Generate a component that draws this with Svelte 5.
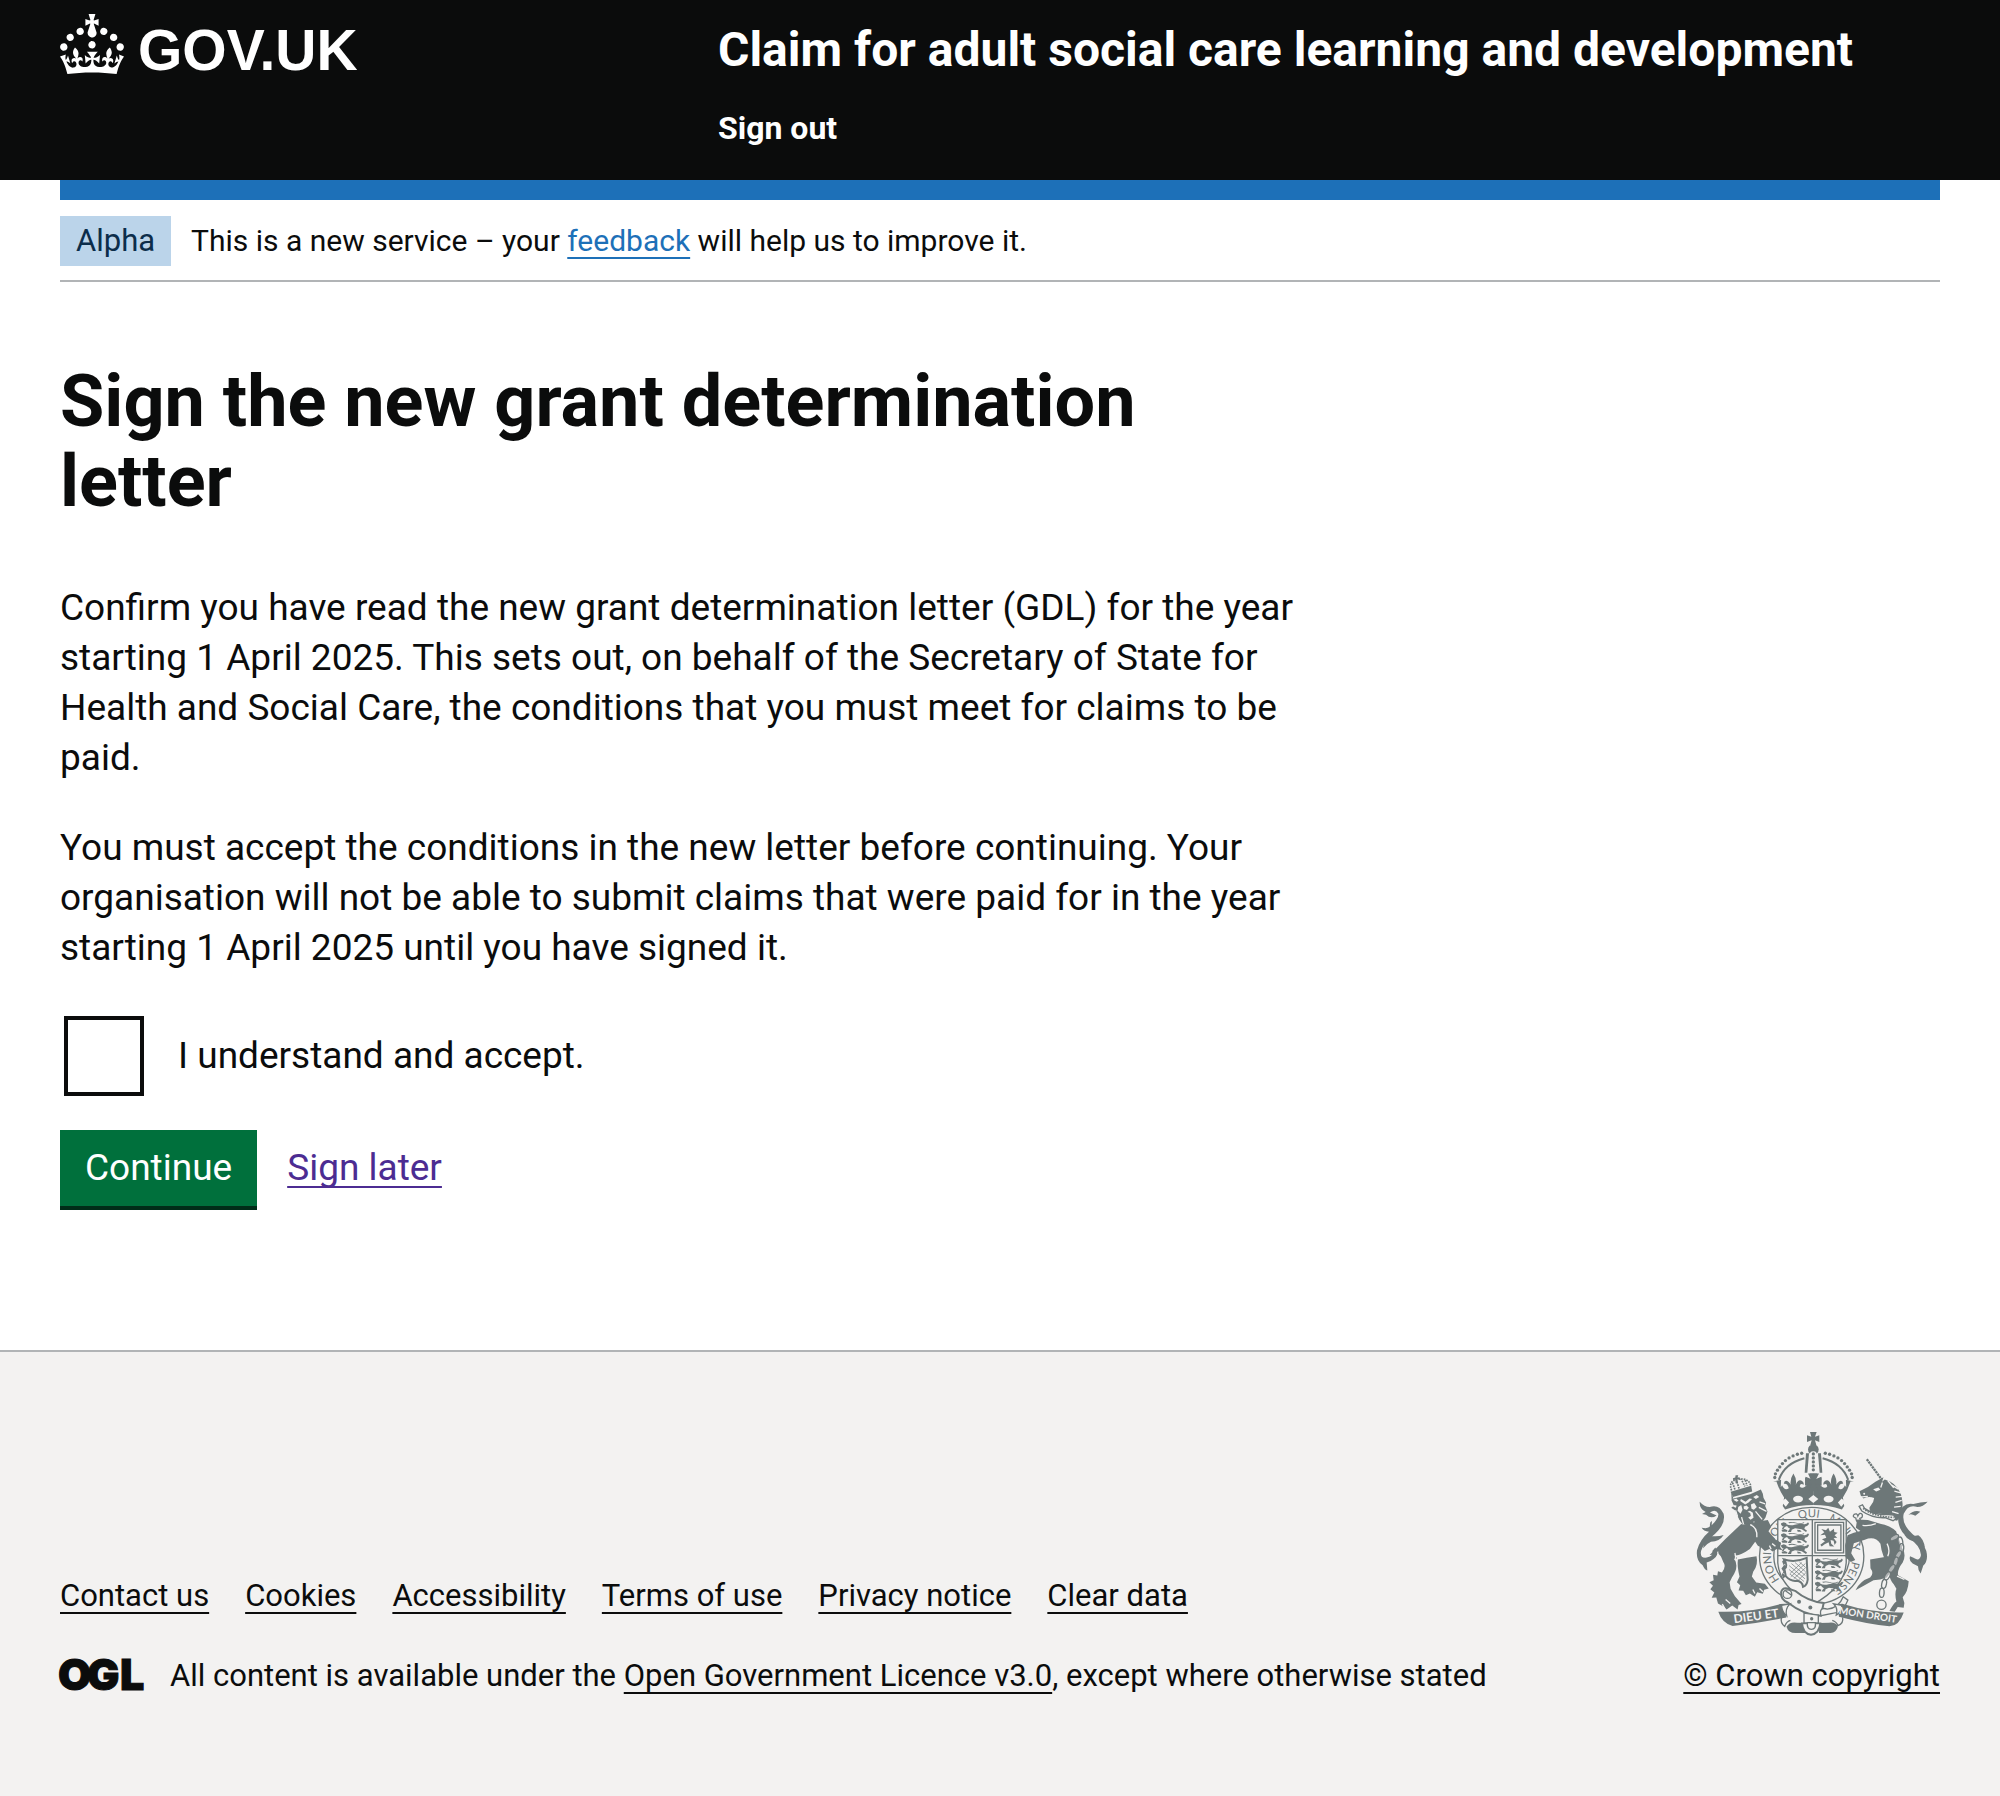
<script>
  const footerLinks = ['Contact us', 'Cookies', 'Accessibility', 'Terms of use', 'Privacy notice', 'Clear data'];
  let accepted = $state(false);

  // Beads along the left arch of the royal crown; the right arch mirrors them.
  const beads = [
    [308, 203], [310, 192], [316, 181], [323, 171], [331, 161], [340, 152],
    [351, 144], [363, 138], [376, 133], [389, 130]
  ];
  // Rows of lions passant in the first and fourth quarters of the shield.
  const lions = [
    [325, 337], [325, 370], [325, 403],
    [427, 446], [427, 481], [427, 516]
  ];
  // Words of the garter motto and where each starts along the ring.
  const motto = [
    ['HONI', 15], ['SOIT', 130], ['QUI', 240], ['MAL', 330], ['Y', 432], ['PENSE', 482]
  ];
  // Links of the unicorn's chain: centre and rotation.
  const chain = [
    [668, 384, 60], [686, 396, -10], [689, 416, 5], [680, 436, 30], [672, 456, 15],
    [660, 477, 35], [647, 499, 30], [637, 523, 12], [630, 550, 3]
  ];
</script>

<header class="header">
  <div class="container header-grid">
    <a class="logo" href="#home" aria-label="GOV.UK">
      <svg class="crown" viewBox="0 0 32 30" aria-hidden="true">
        <path d="M22.6 10.4c-1 .4-2-.1-2.4-1-.4-.9.1-2 1-2.4.9-.4 2 .1 2.4 1s-.1 2-1 2.4m-5.9 6.7c-.9.4-2-.1-2.4-1-.4-.9.1-2 1-2.4.9-.4 2 .1 2.4 1s-.1 2-1 2.4m10.8-3.7c-1 .4-2-.1-2.4-1-.4-.9.1-2 1-2.4.9-.4 2 .1 2.4 1s0 2-1 2.4m3.3 4.8c-1 .4-2-.1-2.4-1-.4-.9.1-2 1-2.4.9-.4 2 .1 2.4 1s-.1 2-1 2.4M17 4.7l2.3 1.2V2.5l-2.3.7-.2-.2.9-3h-3.4l.9 3-.2.2c-.1.1-2.3-.7-2.3-.7v3.4L15 4.7c.1.1.1.2.2.2l-1.3 4c-.1.2-.1.4-.1.6 0 1.1.8 2 1.9 2.2h.7c1-.2 1.9-1.1 1.9-2.1 0-.2 0-.4-.1-.6l-1.3-4c-.1-.2 0-.2.1-.3m-7.6 5.7c.9.4 2-.1 2.4-1 .4-.9-.1-2-1-2.4-.9-.4-2 .1-2.4 1s0 2 1 2.4m-5 3c.9.4 2-.1 2.4-1 .4-.9-.1-2-1-2.4-.9-.4-2 .1-2.4 1s.1 2 1 2.4m-3.2 4.8c.9.4 2-.1 2.4-1 .4-.9-.1-2-1-2.4-.9-.4-2 .1-2.4 1s0 2 1 2.4m14.8 11c4.4 0 8.6.3 12.3.8 1.1-4.5 2.4-7 3.7-8.8l-2.5-.9c.2 1.3.3 1.9 0 2.7-.4-.4-.8-1.1-1.1-2.3l-1.2 4c.7-.5 1.3-.8 2-.9-1.1 2.5-2.6 3.1-3.5 3-1.1-.2-1.7-1.2-1.5-2.1.3-1.2 1.5-1.5 2.1-.1 1.1-2.3-.8-3-2-2.3 1.9-1.9 2.1-3.5.6-5.6-2.1 1.6-2.1 3.2-1.2 5.5-1.2-1.4-3.2-.6-2.5 1.6.9-1.4 2.1-.5 1.9.8-.2 1.1-1.7 2.1-3.5 1.9-2.7-.2-2.9-2.1-2.9-3.6.7-.1 1.9.5 2.9 1.9l.4-4.3c-1.1 1.1-2.1 1.4-3.2 1.4.4-1.2 2.1-3 2.1-3h-5.4s1.7 1.9 2.1 3c-1.1 0-2.1-.2-3.2-1.4l.4 4.3c1-1.4 2.2-2 2.9-1.9-.1 1.5-.2 3.4-2.9 3.6-1.9.2-3.4-.8-3.5-1.9-.2-1.3 1-2.2 1.9-.8.7-2.3-1.2-3-2.5-1.6.9-2.2.9-3.9-1.2-5.5-1.5 2-1.3 3.7.6 5.6-1.2-.7-3.1 0-2 2.3.6-1.4 1.8-1.1 2.1.1.2.9-.3 1.9-1.5 2.1-.9.2-2.4-.5-3.5-3 .6 0 1.2.3 2 .9l-1.2-4c-.3 1.1-.7 1.9-1.1 2.3-.3-.8-.2-1.4 0-2.7l-2.9.9C1.3 23 2.6 25.5 3.7 30c3.7-.5 7.9-.8 12.3-.8" />
      </svg>
      <span class="wordmark">GOV.UK</span>
    </a>
    <div class="service">
      <a class="service-name" href="#service">Claim for adult social care learning and development</a>
      <nav aria-label="Account"><a class="sign-out" href="#sign-out">Sign out</a></nav>
    </div>
  </div>
</header>

<div class="container">
  <div class="bar"></div>
  <div class="phase">
    <strong class="tag">Alpha</strong>
    <span>This is a new service – your <a class="link" href="#feedback">feedback</a> will help us to improve it.</span>
  </div>

  <main class="main">
    <h1>Sign the new grant determination letter</h1>
    <p>
      Confirm you have read the new grant determination letter (GDL) for the year starting
      1 April 2025. This sets out, on behalf of the Secretary of State for Health and Social
      Care, the conditions that you must meet for claims to be paid.
    </p>
    <p>
      You must accept the conditions in the new letter before continuing. Your organisation
      will not be able to submit claims that were paid for in the year starting 1 April 2025
      until you have signed it.
    </p>
    <form onsubmit={(e) => e.preventDefault()}>
      <div class="checkbox">
        <input id="accept" type="checkbox" bind:checked={accepted} />
        <label for="accept">I understand and accept.</label>
      </div>
      <div class="actions">
        <button type="submit">Continue</button>
        <a class="visited" href="#later">Sign later</a>
      </div>
    </form>
  </main>
</div>

<footer class="footer">
  <div class="container footer-row">
    <div class="meta">
      <ul>
        {#each footerLinks as label}
          <li><a href="#footer">{label}</a></li>
        {/each}
      </ul>
      <div class="licence">
        <svg class="ogl" viewBox="0 0 82 34" role="img" aria-label="Open Government Licence">
          <text x="-2 27 60" y="31">OGL</text>
        </svg>
        <span>All content is available under the <a href="#ogl">Open Government Licence v3.0</a>, except where otherwise stated</span>
      </div>
    </div>

    <div class="copyright">
      <svg class="arms" viewBox="60 60 720 620" aria-hidden="true">
        <defs>
          <path id="garter" d="M333 521A122 116 0 1 1 440 553" />
          <g id="passant">
            <path d="M2 4l8-3 8 3-1 6-5 4-6-1-4-5zM17 6q12 6 26 2l16-3 14 2q8-1 10-6l3 4q-3 8-12 9l-2 6 8 6-3 4-13-8-20-3-10 4-2 7h-10l3-5 4-5q-7-3-9-8l-7 3-4 7H4l3-6zM24 1q12-3 24 1t24-2l-2 4q-12 4-24 0t-20 0z" />
            <path d="M3 24l10-3 8 4-1 4H6zM50 23l9 1 5 5h-12z" />
          </g>
          <g id="half-crown">
            <path class="line thick" d="M320 210Q338 160 397 145" />
            <path d="M402 130h9l-5 59h-8z" />
            <path d="M303 215l24-5-1 22 4-6q8 18 20 9-4-16-15-13 2-13 13-7 5 4 8 10-3-17 8-34 11 17 7 34 8-20 20-11 5 4 4 11-10-7-12 4 5 8 16 2 8-7 5-16l-3-1v-13l20 8-8-18h12v95q-46 0-86 13l-7-10 4-26q-14-20-23-48z" />
            {#each beads as [x, y]}<circle cx={x} cy={y} r="5" />{/each}
          </g>
        </defs>

        <!-- Crown -->
        <use href="#half-crown" />
        <use href="#half-crown" transform="matrix(-1 0 0 1 849 0)" />
        <path d="M414 66h20l-5 14 13-4v20l-13-5 4 14h-18l4-14-14 5V76l13 4z" />
        <circle cx="424" cy="119" r="16" />
        <path class="cut" d="M412 140q0-16 12-16t12 16v48h-24z" />
        {#each [132, 144, 156, 168, 180] as y}<circle cx="424" cy={y} r="5" />{/each}
        <path d="M408 191h33l-10 20 18-9v26l-18-8 8 24h-29l8-24-19 8v-26l18 9z" />
        <g class="cut">
          <ellipse cx="378" cy="268" rx="15" ry="10" /><ellipse cx="470" cy="268" rx="15" ry="10" />
          <path d="M424 256l15 12-15 12-15-12zM328 276l12-10 11 12-10 13zM521 276l-12-10-11 12 10 13z" />
        </g>

        <!-- Garter -->
        <ellipse class="paper" cx="419" cy="439" rx="157" ry="146" />
        <ellipse class="line" cx="419" cy="439" rx="114" ry="109" />
        <text class="motto">{#each motto as [word, start]}<textPath href="#garter" startOffset={start}>{word}</textPath>{/each}</text>

        <!-- Shield -->
        <path class="paper" d="M317 330h206v130q-5 75-102 126-98-51-104-126z" />
        <path class="line" d="M421 330v254M317 438h206" />
        {#each lions as [x, y]}<use href="#passant" {x} {y} />{/each}
        <path class="line" d="M429 338h86v92h-86zM437 346h70v76h-70z" />
        <path d="M448 358l14 4 7-8 5 12 12-9 1 10 10 2-9 8 8 7-11 1 9 12-6 9-3-13-9-2 2 11 9 9-14-1-3-12-12 6-9 7-4-6 14-10-9-6 13-5-4-9-14 2 12-9z" />
        <path class="line thick" d="M336 450q34 10 68-5l3 65q-2 18-14 22-2-17-20-18-18 2-32-14l-4-22q12-8-1-28z" />
        <path class="fine" d="M351 480l45 36M351 468l48 40M358 462l42 36M369 459l32 28M382 457l18 16M354 494l27 20M353 493l36-34M356 502l44-40M365 508l36-34M378 513l24-24" />
        <path d="M330 456l9-10 4 12-7 7 8 8-9 6 7 9-9 3 8 10-8 6-4-12 5-8-6-10 7-9z" />

        <!-- Belt -->
        <path class="paper heavy" d="M327 548q4-15 20-11l24 8q34 29 84 36l-8 38q-52-2-100-40-22-8-20-31z" />
        <path class="paper" d="M447 619q-7-28 19-20 34-2 48-37l14 10q-13 37-47 40z" />
        <circle class="line" cx="346" cy="554" r="13" />
        <path class="line" d="M340 544l20 14" />
        <circle cx="381" cy="577" r="6" /><circle cx="415" cy="594" r="6" />
        <path d="M343 652q10-16 32-12l35 1v30h-40q-21 0-27-19zM498 652q-7-15-27-12l-30 1v30h35q17-1 22-19z" />
        <path class="paper" d="M396 611l43 6v24h-43z" />
        <circle cx="419" cy="628" r="5" />
        <path class="paper heavy" d="M390 642h55q-3 31-28 34-25-3-27-34z" />
        <path class="paper" d="M406 640h24q3 20-12 20-14 0-12-20z" />

        <!-- Motto ribbons -->
        <path d="M138 607q96 3 186-23l31-2q-24 18-12 42-84 17-162 26-32-9-43-43z" />
        <path class="line" d="M328 625q-4 16 10 26 5-15 17-18M512 624q4 18-14 25-4-12-17-16" />
        <path d="M486 585l25-2q88 28 185 26-13 40-43 42-72-8-152-29 0-23-15-37z" />
        <path class="paper" d="M328 588l26-5q-16 15-10 37-13-9-16-32zM510 588l-25-5q14 14 8 34 15-6 17-29z" />
        <text class="ribbon wide" transform="translate(186 642) rotate(-8)">DIEU ET</text>
        <text class="ribbon" transform="translate(500 613) rotate(9)">MON DROIT</text>

        <!-- Lion -->
        <path d="M178 268l56-15 32-14 6 13 2 12 8 15-3 10 7 16-6 18-8 12 1 20-12-12-2 30-22-24-26-5-14-20-8-22-12-8 8-6-8-18 6-5-6-18z" />
        <path class="cut" d="M183 270l10 6 6-3-7-7zM206 268l14 8 12-10 8 2-11 10-10 6-15-10zM243 262l11-6 7 6-10 6zM183 286l10 1-2 7-8-3zM198 292l9-6 4 14-6 12-9-9zM236 284l10-4 8 12-9 8-7-3zM214 290l9-3 7 7-6 7-9-3zM226 306l7-3 9 6 2 15-9 6-7-7 8-4-2-9z" />
        <path class="nick" d="M194 318l8 24M208 322l6 22M250 305l20 24M260 293l23 12M262 276l17 6M244 336l14 14M190 302l6 18" />
        <path d="M175 246l62-18 3 17-58 17z" />
        <path class="beads" d="M178 242q-10-27 14-32M235 226q-6-22-36-18M194 216l7 22M206 206l12 24M181 219l7 20M219 211l6 17" />
        <path d="M190 196h8l-2 7 6-1 1 7-7-1 1 12h-7l-1-11-6 3-1-7 7-2z" />
        <path d="M215 345l34-8 38-6 10 20-8 14q14 17 22 25l16 9-3 13 7 10-17-4-13 8-9-8-14 6-12-11-9-5-8-12-16 22q-28 20-46 20l8 8-8 2q14 26-8 56l-7 14 3 20 13 22 20 24-9 3-3 13-16-12-17 12-8-8-18-10-5-18-14 1 8-16-12-10 8-10-11-11 13-6-2-16 13 2 2-13 12 4q14-18 4-32l-7-16q-10-7-8-17-12 13-26 12 46-48 95-93z" />
        <path d="M197 450q26-6 56-10 6 26-10 47l-4 14 13 18 26 4 12 14-14 4-4 12-17-5-7 14-15-10-12 5-8-13-14-1 5-16-10-9 8-17q-8-31-5-51z" />
        <path class="nick" d="M234 345q22 8 20 38M188 430q4 12 0 22M196 440l55-8M160 570l14 12M150 584l8 14M300 402l10 8M292 408l5 11M262 537l10 10M242 540l6 12" />
        <path d="M82 276q14 16 30 16 28-10 42 20 8 35-36 69-23 17-32 43-4 23 17 20 22-5 17-20l9-10q17 25-14 40l-12 5 2 24q-8-2-14-16-21-13-17-45 8-32 36-56-17-1-22-12 20 4 25-4-2-13 6-16l-1 13q22-22 20-35-8-16-25-4l20 9q-17 12-32-2l-12-2 11-6q-19-9-18-31z" />
        <path d="M112 378q22 4 42-2-12 20-38 20-14 6-24 20 4-28 20-38z" />

        <!-- Unicorn -->
        <path class="horn" d="M585 148l44 60" />
        <path d="M563 244q26-10 48-28l24-14-4 14 8-7q34 9 48 42 10 29 2 64l-13 18q-26-4-45-20l-24-3q-16-5-14-17l11-16 3-12q-16-7-32 1l-8-8z" />
        <path class="nick" d="M648 212l18 22M660 226l20 12M668 244l22 6M672 262l20-2M671 278l19-6M667 292l20-2M661 306l20 6M632 218l-5 15M562 262l26-2" />
        <path class="cut" d="M604 238l16-5 6 7-13 5z" />
        <circle class="cut" cx="577" cy="252" r="3" />
        <path class="paper" d="M562 290l10-5 6 11q31 21 64 18l24 2 6 11-8 6-24-9q-39 2-70-20z" />
        <path class="beads" d="M574 296q30 25 92 27" />
        <path d="M556 329l32 2 40 12q26 4 45 22l18 50q14 20 2 44-17 22-14 38l32 18q-2 32-18 48l5 18-2 14-18-2-9 14-16-2q12-23 21-29-6-25 0-38l-8-14q-18-18-12-50-24-34-28-72-17-25-47-12l-33 11-8 30 12 20-13 6-16-14-1-36 7-30q18-9 39-13l-14-10z" />
        <path d="M595 450l44-8q25-6 30-20l4 24-11 34-17 24q-20 8-40 8l-28 16-26 14q14-28 44-38 13-12 1-28z" />
        <path class="line" d="M552 325q-12-4-5-11 8-5 11 5 6-13 13-5 3 10-7 12 5 12-4 13-7-2-8-14zM524 400q-4 30 16 46M536 362l-14 12M562 372q6 14 1 36" />
        <path class="nick" d="M612 342q-20 8-40 5M648 440q8-18-2-38M676 500l22 10" />
        <path d="M768 276q-14 16-31 16-27-10-41 20-8 35 36 69 23 17 32 43 7 29-9 44l-8 24q-8-8-8-22l-16-8q-12-8-8-22l9 4q20 14 24-8-2-29-37-50-37-27-31-72 12-37 45-31 21-6 43-7z" />
        <path d="M740 377q-22 4-42-2 12 20 38 20 14 6 24 20-4-28-20-38zM710 316q18-17 36-10l-15 12q-13-8-21-2z" />
        {#each chain as [x, y, r]}
          <ellipse class="chain" cx={x} cy={y} rx="7" ry="14" transform="rotate({r} {x} {y})" />
        {/each}
        <circle class="chain" cx="629" cy="586" r="14" />
      </svg>
      <a href="#copyright">© Crown copyright</a>
    </div>
  </div>
</footer>

<style>
  :global(body) {
    margin: 0;
    background: #f3f2f1;
    color: #0b0c0c;
    font-family: Roboto, Arial, sans-serif;
  }
  :global(#app) { background: #fff; }

  a {
    color: inherit;
    text-decoration-thickness: 2px;
    text-underline-offset: 6px;
    text-decoration-skip-ink: none;
  }
  .container { margin: 0 60px; }

  .header { background: #0b0c0c; color: #fff; }
  .header-grid {
    display: grid;
    grid-template-columns: 35fr 65fr;
    padding: 14px 0 26px;
  }
  .header a { text-decoration: none; }
  .logo { display: flex; align-items: flex-start; gap: 14px; }
  .crown { width: 64px; height: 60px; fill: #fff; }
  .wordmark { font: 700 57px/72px 'Liberation Sans', Arial, sans-serif; }
  .service-name { display: block; font-size: 48px; font-weight: 700; line-height: 72px; }
  .service nav { margin-top: 16px; }
  .sign-out { display: block; font-size: 32px; font-weight: 700; line-height: 52px; }

  .bar { height: 20px; background: #1d70b8; }
  .phase {
    display: flex;
    align-items: center;
    gap: 20px;
    padding: 16px 0 14px;
    border-bottom: 2px solid #b1b4b6;
    font-size: 30px;
    line-height: 50px;
  }
  .tag { padding: 0 16px; background: #bbd4ea; color: #0c2d4a; font-size: 31px; font-weight: 400; }
  .link { color: #1d70b8; }

  .main { width: 67%; padding: 80px 0 144px; font-size: 37px; line-height: 50px; }
  h1 { margin: 0 0 61px; font-size: 72px; line-height: 80px; }
  p { margin: 0 0 40px; }

  form { padding-top: 3px; }
  .checkbox { display: flex; align-items: center; gap: 34px; margin: 0 4px 34px; }
  .checkbox input {
    appearance: none;
    box-sizing: border-box;
    width: 80px;
    height: 80px;
    margin: 0;
    border: 4px solid #0b0c0c;
    background: #fff;
  }
  .checkbox input:checked { box-shadow: inset 0 0 0 14px #fff; background: #0b0c0c; }
  .actions { display: flex; align-items: center; gap: 30px; }
  button {
    padding: 13px 25px;
    border: 0;
    box-shadow: 0 4px 0 #002d18;
    background: #00703c;
    color: #fff;
    font: inherit;
  }
  .visited { color: #4c2c92; }

  .footer {
    padding: 78px 0 100px;
    border-top: 2px solid #b1b4b6;
    background: #f3f2f1;
    font-size: 31px;
    line-height: 40px;
  }
  .footer-row { display: flex; align-items: flex-end; justify-content: space-between; }
  ul { display: flex; gap: 36px; margin: 0 0 40px; padding: 0; list-style: none; }
  .licence { display: flex; align-items: center; gap: 28px; }
  .ogl {
    width: 82px;
    height: 34px;
    overflow: visible;
    font: 900 43px Inter, sans-serif;
    fill: #0b0c0c;
    stroke: #0b0c0c;
  }

  .copyright { display: flex; flex-direction: column; align-items: center; gap: 20px; }
  .arms { width: 240px; height: 206px; fill: #6d7778; }
  .arms .cut { fill: #f3f2f1; }
  .arms .paper { fill: #f3f2f1; stroke: #6d7778; stroke-width: 4; }
  .arms .line { fill: none; stroke: #6d7778; stroke-width: 4; }
  .arms .thick, .arms .heavy { stroke-width: 6; }
  .arms .fine { fill: none; stroke: #6d7778; stroke-width: 2; }
  .arms .nick { fill: none; stroke: #f3f2f1; stroke-width: 4; }
  .arms .beads { fill: none; stroke: #6d7778; stroke-width: 5; stroke-dasharray: 5 3; }
  .arms .horn { fill: none; stroke: #6d7778; stroke-width: 7; stroke-dasharray: 7 2; }
  .arms .chain { fill: #f3f2f1; fill-opacity: 0.5; stroke: #6d7778; stroke-width: 4; }
  .motto { font: 400 34px Lato, sans-serif; }
  .ribbon { font: 700 30px Lato, sans-serif; fill: #f3f2f1; }
  .ribbon.wide { font-size: 36px; }
</style>
